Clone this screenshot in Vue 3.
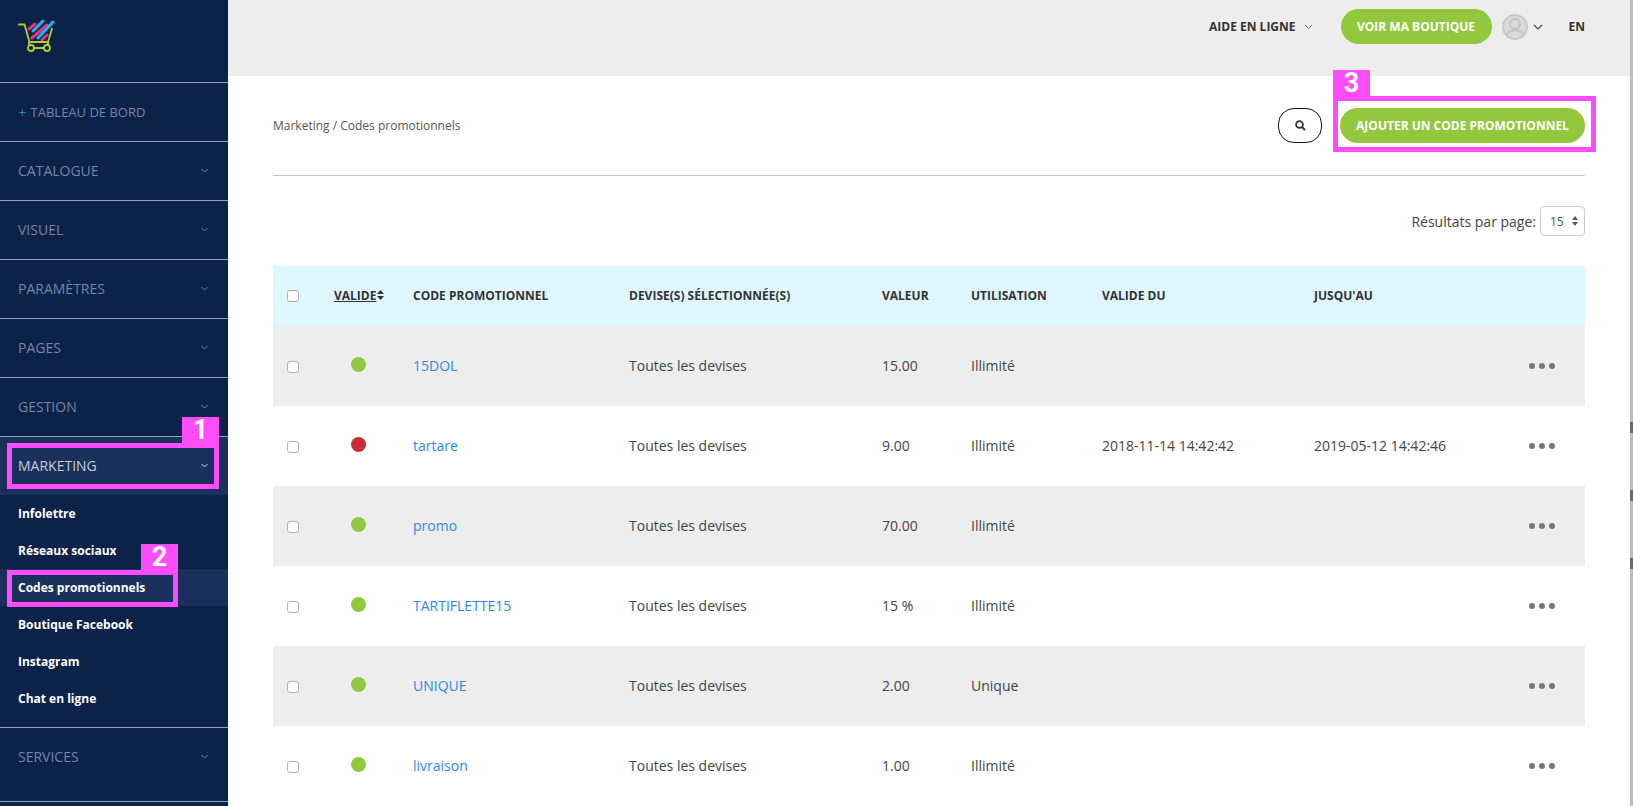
<template>
  <div class="app">
    <aside class="sidebar">
      <div class="logo">
        <svg width="60" height="60" viewBox="0 0 60 60" fill="none">
          <g stroke-linecap="round" stroke-width="3">
            <path d="M29 29 L35 24" stroke="#e8337a" />
            <path d="M33 31 L43 21" stroke="#21b5ee" />
            <path d="M32 38 L47 25" stroke="#e8337a" />
            <path d="M38 38 L53 22" stroke="#21b5ee" />
            <path d="M42 40 L47 35" stroke="#e8337a" />
          </g>
          <path d="M19 24.500 H24.500 L29.500 42 H48 L52 28.500" stroke="#b3cc2f" stroke-width="1.800" stroke-linecap="round" stroke-linejoin="round" />
          <path d="M29 42 V45 M48 42 V45 M34 48 H44" stroke="#b3cc2f" stroke-width="1.800" />
          <circle cx="31" cy="48" r="3" stroke="#b3cc2f" stroke-width="1.800" />
          <circle cx="47" cy="48" r="3" stroke="#b3cc2f" stroke-width="1.800" />
        </svg>
      </div>

      <a class="nav-item dash"><span class="plus">+</span> TABLEAU DE BORD</a>

      <template v-for="item in menu" :key="item.label">
        <a class="nav-item" :class="{ open: item.open }">
          {{ item.label }}
          <svg class="chev" width="7" height="5" viewBox="0 0 7 5" fill="none"><path d="M0.500 1 L3.500 4 L6.500 1" stroke="currentColor" /></svg>
        </a>
        <div v-if="item.open" class="sub">
          <a v-for="s in subItems" :key="s" class="sub-item" :class="{ current: s === 'Codes promotionnels' }">{{ s }}</a>
        </div>
      </template>
      <div class="nav-end"></div>

      <div class="mark mark-1"><span>1</span></div>
      <div class="mark mark-2"><span>2</span></div>
    </aside>

    <div class="main">
      <header class="topbar">
        <span class="help">AIDE EN LIGNE
          <svg width="9" height="6" viewBox="0 0 9 6" fill="none"><path d="M1 1 L4.500 4.500 L8 1" stroke="#666" /></svg>
        </span>
        <button class="btn btn-shop">VOIR MA BOUTIQUE</button>
        <svg class="avatar" width="26" height="26" viewBox="0 0 26 26">
          <circle cx="13" cy="13" r="13" fill="#c9c9c9" />
          <circle cx="13" cy="13" r="11" fill="#d9d9d9" />
          <circle cx="13" cy="10" r="5" fill="#d9d9d9" stroke="#c4c4c4" stroke-width="2" />
          <path d="M4 21 C6 15 20 15 22 21" fill="#d9d9d9" stroke="#c4c4c4" stroke-width="2" />
        </svg>
        <svg class="avatar-chev" width="10" height="6" viewBox="0 0 10 6" fill="none"><path d="M1 1 L5 5 L9 1" stroke="#444" stroke-width="1.200" /></svg>
        <span class="lang">EN</span>
      </header>

      <div class="content">
        <div class="toolbar">
          <span class="crumb">Marketing / Codes promotionnels</span>
          <button class="btn-search" aria-label="Rechercher">
            <svg width="11" height="11" viewBox="0 0 11 11" fill="none">
              <circle cx="4.500" cy="4.500" r="3.400" stroke="#333" stroke-width="1.800" />
              <path d="M7 7 L10 10" stroke="#333" stroke-width="2" />
            </svg>
          </button>
          <button class="btn btn-add">AJOUTER UN CODE PROMOTIONNEL</button>
          <div class="mark mark-3"><span>3</span></div>
        </div>

        <div class="per-page">
          <span>Résultats par page:</span>
          <div class="select">
            15
            <svg width="6" height="10" viewBox="0 0 6 10"><path d="M3 0 L6 4 H0 Z M3 10 L0 6 H6 Z" fill="#555" /></svg>
          </div>
        </div>

        <table class="codes">
          <colgroup>
            <col v-for="w in colWidths" :key="w.id" :style="{ width: w.size + 'px' }" />
          </colgroup>
          <thead>
            <tr>
              <th class="check"><i class="box"></i></th>
              <th><u>VALIDE</u><svg class="sort" width="7" height="10" viewBox="0 0 7 10"><path d="M3.500 0 L7 4 H0 Z M3.500 10 L0 6 H7 Z" fill="#333" /></svg></th>
              <th>CODE PROMOTIONNEL</th>
              <th>DEVISE(S) SÉLECTIONNÉE(S)</th>
              <th>VALEUR</th>
              <th>UTILISATION</th>
              <th>VALIDE DU</th>
              <th>JUSQU'AU</th>
              <th></th>
            </tr>
          </thead>
          <tbody>
            <tr v-for="row in rows" :key="row.code">
              <td class="check"><i class="box"></i></td>
              <td><i class="dot" :class="row.on ? 'on' : 'off'"></i></td>
              <td><a class="code">{{ row.code }}</a></td>
              <td>Toutes les devises</td>
              <td>{{ row.value }}</td>
              <td>{{ row.usage }}</td>
              <td>{{ row.from }}</td>
              <td>{{ row.to }}</td>
              <td class="more"><i></i><i></i><i></i></td>
            </tr>
          </tbody>
        </table>
      </div>
    </div>

    <div class="edge"><i></i><i></i><i></i></div>
  </div>
</template>

<script setup>
const menu = [
  { label: "CATALOGUE" },
  { label: "VISUEL" },
  { label: "PARAMÈTRES" },
  { label: "PAGES" },
  { label: "GESTION" },
  { label: "MARKETING", open: true },
  { label: "SERVICES" },
]

const subItems = [
  "Infolettre",
  "Réseaux sociaux",
  "Codes promotionnels",
  "Boutique Facebook",
  "Instagram",
  "Chat en ligne",
]

const colWidths = [61, 79, 216, 253, 89, 131, 212, 206, 65].map((size, id) => ({ id, size }))

const rows = [
  { code: "15DOL", on: true, value: "15.00", usage: "Illimité", from: "", to: "" },
  { code: "tartare", on: false, value: "9.00", usage: "Illimité", from: "2018-11-14 14:42:42", to: "2019-05-12 14:42:46" },
  { code: "promo", on: true, value: "70.00", usage: "Illimité", from: "", to: "" },
  { code: "TARTIFLETTE15", on: true, value: "15 %", usage: "Illimité", from: "", to: "" },
  { code: "UNIQUE", on: true, value: "2.00", usage: "Unique", from: "", to: "" },
  { code: "livraison", on: true, value: "1.00", usage: "Illimité", from: "", to: "" },
]
</script>

<style>
html, body {
  margin: 0;
  height: 100%;
  overflow: hidden;
  background: #fff;
}
</style>

<style scoped>
.app {
  display: flex;
  height: 806px;
  overflow: hidden;
  font-family: "Open Sans", sans-serif;
  font-size: 14px;
  color: #444;
}
.sidebar {
  position: relative;
  flex: 0 0 228px;
  background: #0d2249;
}
.logo {
  height: 82px;
}
.logo svg {
  display: block;
}
.nav-item {
  display: flex;
  align-items: center;
  justify-content: space-between;
  box-sizing: border-box;
  height: 59px;
  padding: 0 20px 2px 18px;
  border-top: 1px solid #8fa0c4;
  color: #7285a8;
  font-size: 14px;
}
.nav-item.dash {
  justify-content: flex-start;
  gap: 4px;
  padding-bottom: 0;
  font-size: 13px;
}
.plus {
  color: #2bb7ea;
  font-size: 15px;
  font-weight: 300;
}
.nav-end {
  margin-top: 15px;
  border-top: 1px solid #8fa0c4;
}
.nav-item.open {
  background: #19315c;
  color: #c5cede;
}
.sub {
  padding: 0 0 10px;
  height: 232px;
  box-sizing: border-box;
}
.sub-item {
  display: flex;
  align-items: center;
  box-sizing: border-box;
  height: 37px;
  padding-left: 18px;
  color: #fff;
  font-size: 12px;
  font-weight: 700;
}
.sub-item.current {
  background: #19315c;
}

.mark {
  position: absolute;
  box-sizing: border-box;
  border: 5px solid #ff4dfa;
  pointer-events: none;
}
.mark span {
  position: absolute;
  right: -5px;
  bottom: calc(100% + 4px);
  width: 37px;
  height: 27px;
  background: #ff4dfa;
  color: #fff;
  font: 700 27px/27px Roboto, sans-serif;
  text-align: center;
}
.mark-1 {
  left: 7px;
  top: 443px;
  width: 212px;
  height: 46px;
}
.mark-2 {
  left: 7px;
  top: 570px;
  width: 171px;
  height: 37px;
}
.mark-3 {
  left: 1060px;
  top: 20px;
  width: 263px;
  height: 56px;
}
.mark-3 span {
  left: -5px;
  right: auto;
}

.main {
  flex: 1;
  min-width: 0;
}
.topbar {
  display: flex;
  align-items: center;
  justify-content: flex-end;
  height: 76px;
  box-sizing: border-box;
  padding: 0 45px 23px 0;
  background: #ededed;
}
.help {
  display: flex;
  align-items: center;
  gap: 8px;
  margin-right: 28px;
  font-size: 12px;
  font-weight: 700;
  color: #333;
}
.btn {
  border: none;
  border-radius: 18px;
  background: #93c83e;
  color: #fff;
  height: 35px;
  font-family: inherit;
  font-size: 12px;
  font-weight: 700;
  padding: 0;
}
.btn-shop {
  width: 151px;
}
.avatar {
  margin-left: 10px;
}
.avatar-chev {
  margin-left: 5px;
}
.lang {
  margin-left: 26px;
  font-size: 12px;
  font-weight: 700;
  color: #333;
}
.content {
  padding: 0 45px;
}
.toolbar {
  position: relative;
  display: flex;
  align-items: center;
  height: 100px;
  box-sizing: border-box;
  border-bottom: 1px solid #c8c8c8;
}
.crumb {
  flex: 1;
  font-size: 12px;
  color: #555;
}
.btn-search {
  display: flex;
  align-items: center;
  justify-content: center;
  width: 44px;
  height: 35px;
  padding: 0;
  background: #fff;
  border: 1px solid #111;
  border-radius: 16px;
  margin-right: 18px;
}
.btn-add {
  width: 245px;
}
.per-page {
  display: flex;
  align-items: center;
  justify-content: flex-end;
  gap: 4px;
  height: 30px;
  margin-top: 30px;
  color: #444;
}
.select {
  display: flex;
  align-items: center;
  justify-content: space-between;
  box-sizing: border-box;
  width: 45px;
  height: 30px;
  padding: 0 6px 0 9px;
  border: 1px solid #ccc;
  border-radius: 4px;
  font-size: 12px;
  color: #555;
}
.codes {
  width: 1312px;
  margin-top: 30px;
  table-layout: fixed;
  border-collapse: collapse;
}
th {
  height: 58px;
  padding: 0 0 2px;
  background: #e0f6fe;
  text-align: left;
  font-size: 12px;
  font-weight: 700;
  color: #333;
  white-space: nowrap;
}
td {
  height: 78px;
  padding: 0 0 2px;
  color: #444;
  white-space: nowrap;
}
tbody tr:nth-child(odd) {
  background: #ededed;
}
th.check, td.check {
  padding-left: 14px;
}
.box {
  display: block;
  width: 12px;
  height: 12px;
  box-sizing: border-box;
  background: #fff;
  border: 1px solid #b0b0b0;
  border-radius: 3px;
}
th .box {
  margin-top: 2px;
}
td .box {
  margin-top: 4px;
}
.sort {
  margin-left: 1px;
}
.dot {
  display: block;
  width: 15px;
  height: 15px;
  margin: 0 0 2px 17px;
  border-radius: 50%;
}
.dot.on {
  background: #93c83e;
}
.dot.off {
  background: #c92e34;
}
.code {
  color: #2e88e8;
}
.more {
  padding-left: 9px;
}
.more i {
  display: inline-block;
  width: 6px;
  height: 6px;
  margin-right: 4px;
  background: #777;
  border-radius: 50%;
  vertical-align: 2px;
}
.edge {
  flex: 0 0 3px;
  display: flex;
  flex-direction: column;
  background: #bdbdbd;
}
.edge i {
  display: block;
  height: 11px;
  margin-top: 57px;
  background: #6a6a6a;
}
.edge i:first-child {
  margin-top: 422px;
}
</style>
